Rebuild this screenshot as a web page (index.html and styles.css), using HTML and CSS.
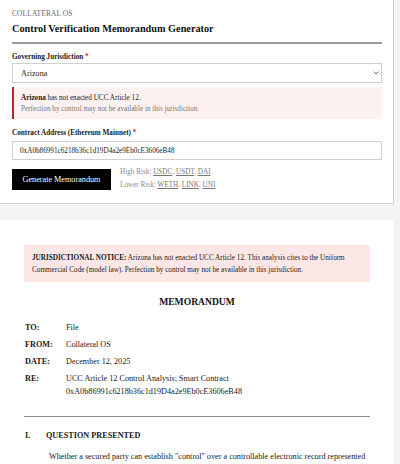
FILE: index.html
```html
<!DOCTYPE html>
<html lang="en">
<head>
<meta charset="utf-8">
<title>Control Verification Memorandum Generator</title>
<link rel="stylesheet" href="styles.css">
</head>
<body>
<section class="panel">
  <p class="brand">COLLATERAL OS</p>
  <h1 class="title">Control Verification Memorandum Generator</h1>

  <label class="label" for="jur">Governing Jurisdiction <span class="req">*</span></label>
  <div class="select-wrap">
    <select id="jur" class="select"><option>Arizona</option></select>
    <svg class="chev" width="6" height="4" viewBox="0 0 6 4"><path d="M0.6 0.6 L3 3 L5.4 0.6" fill="none" stroke="#555" stroke-width="0.9"/></svg>
  </div>

  <div class="alert">
    <div><b>Arizona</b> has not enacted UCC Article 12.</div>
    <div class="alert-sub">Perfection by control may not be available in this jurisdiction.</div>
  </div>

  <label class="label label-2" for="addr">Contract Address (Ethereum Mainnet) <span class="req">*</span></label>
  <input id="addr" class="input" value="0xA0b86991c6218b36c1d19D4a2e9Eb0cE3606eB48">

  <div class="actions">
    <button class="btn">Generate Memorandum</button>
    <div class="hints">
      <div>High Risk: <a href="#">USDC</a>, <a href="#">USDT</a>, <a href="#">DAI</a></div>
      <div>Lower Risk: <a href="#">WETH</a>, <a href="#">LINK</a>, <a href="#">UNI</a></div>
    </div>
  </div>
</section>

<article class="memo">
  <div class="notice"><b>JURISDICTIONAL NOTICE:</b> Arizona has not enacted UCC Article 12. This analysis cites to the Uniform Commercial Code (model law). Perfection by control may not be available in this jurisdiction.</div>

  <h2 class="memo-title">MEMORANDUM</h2>

  <div class="meta">
    <div class="meta-row"><span class="meta-k">TO:</span><span class="meta-v">File</span></div>
    <div class="meta-row"><span class="meta-k">FROM:</span><span class="meta-v">Collateral OS</span></div>
    <div class="meta-row"><span class="meta-k">DATE:</span><span class="meta-v">December 12, 2025</span></div>
    <div class="meta-row"><span class="meta-k">RE:</span><span class="meta-v">UCC Article 12 Control Analysis; Smart Contract<br>0xA0b86991c6218b36c1d19D4a2e9Eb0cE3606eB48</span></div>
  </div>

  <hr class="rule">

  <h3 class="sec"><span class="sec-num">I.</span>QUESTION PRESENTED</h3>
  <p class="para">Whether a secured party can establish "control" over a controllable electronic record represented by the smart contract at the address above.</p>
</article>
</body>
</html>
```

FILE: styles.css
```css
html, body {
  margin: 0;
  padding: 0;
}
body {
  background: #f4f4f3;
  font-family: "Liberation Serif", "Times New Roman", serif;
  color: #1a1a1a;
  width: 400px;
  overflow: hidden;
}
.panel {
  background: #fff;
  width: 370px;
  padding: 9px 11px 11px 12px;
  border-right: 1px solid #cfcfcf;
  border-bottom: 1px solid #cfcfcf;
}
.brand {
  margin: 0;
  font-size: 7.4px;
  line-height: 10px;
  color: #666;
  letter-spacing: 0.15px;
}
.title {
  margin: 3px 0 0;
  font-size: 10.25px;
  line-height: 14px;
  font-weight: bold;
  color: #111;
  padding-bottom: 6px;
  border-bottom: 2px solid #9a9a9a;
}
.label {
  display: block;
  margin-top: 8px;
  font-size: 7.2px;
  line-height: 10px;
  font-weight: bold;
  color: #222;
}
.label-2 {
  margin-top: 9px;
}
.req {
  color: #c0392b;
}
.select-wrap {
  position: relative;
  margin-top: 1px;
}
.select {
  display: block;
  width: 100%;
  height: 20px;
  box-sizing: border-box;
  appearance: none;
  -webkit-appearance: none;
  border: 1px solid #cfcfcf;
  border-radius: 0;
  background: #fff;
  padding: 0 8px;
  font-family: inherit;
  font-size: 8.2px;
  color: #222;
  outline: none;
}
.chev {
  position: absolute;
  right: 3px;
  top: 8px;
}
.alert {
  margin-top: 4px;
  background: #fdf1f1;
  border-left: 2px solid #b3262d;
  padding: 6px 7px 4px 7px;
  font-size: 7.2px;
  line-height: 11px;
  color: #222;
}
.alert-sub {
  color: #777;
}
.input {
  display: block;
  margin-top: 3px;
  width: 100%;
  height: 19px;
  box-sizing: border-box;
  border: 1px solid #cfcfcf;
  border-radius: 0;
  padding: 0 7px;
  font-family: inherit;
  font-size: 7.2px;
  color: #222;
  outline: none;
}
.actions {
  margin-top: 6px;
  display: flex;
  align-items: center;
  gap: 9px;
}
.btn {
  background: #000;
  color: #fff;
  border: 0;
  border-radius: 0;
  height: 21px;
  width: 99px;
  padding: 0;
  font-family: inherit;
  font-size: 8.2px;
}
.hints {
  font-size: 7.2px;
  line-height: 13px;
  color: #8a8a8a;
}
.hints a {
  color: #777;
  text-decoration: underline;
}
.memo {
  margin-top: 16px;
  width: 346px;
  background: #fff;
  padding: 25px 24px 20px 24px;
  border-right: 1px solid #ececec;
}
.notice {
  background: #fce7e6;
  padding: 8px 8px 6px 8px;
  font-size: 7.2px;
  line-height: 11.5px;
  color: #222;
}
.memo-title {
  margin: 13px 0 0;
  text-align: center;
  font-size: 9.6px;
  line-height: 14px;
  font-weight: bold;
  color: #111;
}
.meta {
  margin-top: 13px;
  font-size: 8.2px;
  line-height: 12.5px;
}
.meta-row {
  display: flex;
  margin-bottom: 4.5px;
}
.meta-k {
  width: 41px;
  padding-left: 1px;
  font-weight: bold;
  flex: none;
}
.rule {
  margin: 18px 0 0;
  border: 0;
  border-top: 1px solid #8c8c8c;
}
.sec {
  margin: 13px 0 0;
  font-size: 8.2px;
  line-height: 12px;
  font-weight: bold;
  display: flex;
}
.sec-num {
  width: 21px;
  padding-left: 1px;
}
.para {
  margin: 8px 0 0;
  font-size: 8.2px;
  line-height: 13px;
  text-indent: 25px;
}
```
